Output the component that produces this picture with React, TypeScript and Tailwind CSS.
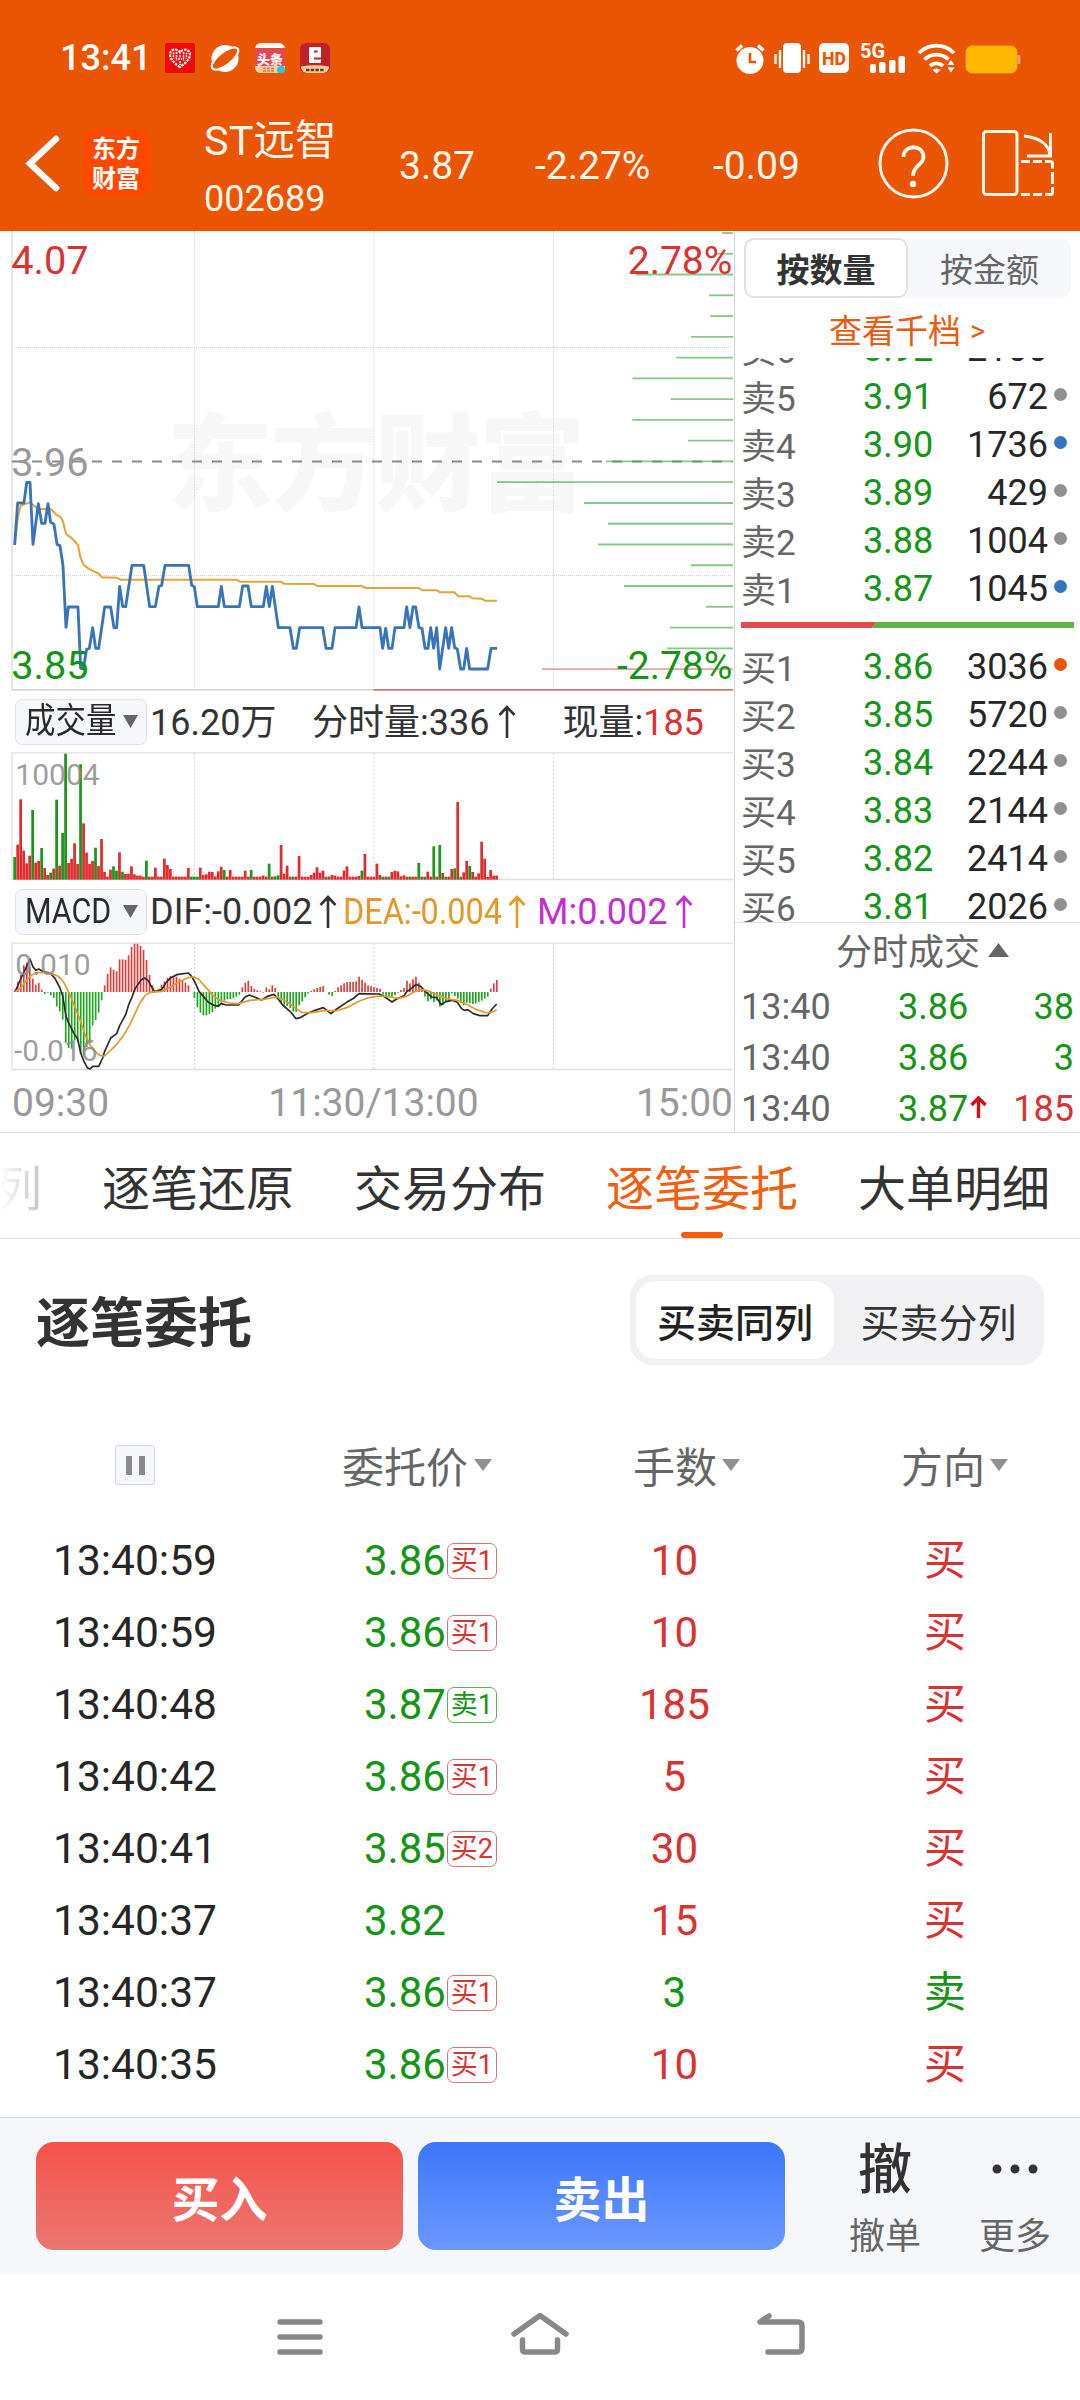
import React, { useState } from 'react';

const RED = '#d93331';
const GREEN = '#159515';

// Chart geometry is kept in 1/3 px units
const PRICE_LINE =
  '44,960 53,834 72,834 80,772 90,772 99,958 115,836 125,895 135,895 144,836 152,892 162,898 171,958 180,962 189,1022 198,1207 205,1146 234,1146 242,1330 250,1332 260,1272 268,1270 278,1208 287,1270 296,1270 314,1146 332,1146 342,1208 350,1208 359,1084 368,1145 377,1145 396,1021 431,1021 449,1145 466,1145 477,1084 485,1081 495,1021 566,1021 575,1081 583,1085 592,1145 655,1145 664,1084 673,1145 718,1145 728,1083 744,1083 754,1145 790,1145 799,1084 808,1145 817,1084 835,1208 870,1208 880,1270 889,1270 899,1208 968,1208 978,1270 996,1270 1005,1208 1068,1208 1077,1146 1086,1208 1140,1208 1148,1270 1157,1210 1166,1270 1176,1270 1185,1208 1212,1208 1220,1146 1230,1208 1239,1146 1247,1146 1257,1208 1266,1210 1275,1270 1284,1270 1292,1208 1301,1270 1310,1208 1319,1332 1337,1208 1346,1270 1355,1208 1364,1268 1372,1272 1382,1332 1391,1332 1400,1270 1409,1332 1463,1332 1473,1270 1491,1270';

const AVERAGE_LINE =
  '44,960 53,880 62,842 88,833 100,840 115,852 152,852 170,870 182,876 189,890 198,927 216,940 234,960 242,1000 252,1021 270,1034 296,1046 306,1057 350,1058 362,1064 710,1064 720,1070 842,1070 852,1076 942,1077 952,1083 1085,1083 1097,1089 1255,1089 1267,1096 1310,1096 1320,1102 1363,1102 1375,1114 1408,1114 1418,1120 1445,1121 1455,1127 1491,1127';

const DIF_LINE =
  '46,904 62,868 80,830 90,808 99,832 108,842 116,838 130,846 150,850 165,866 180,895 188,918 198,980 206,1000 220,1028 233,1048 242,1090 252,1116 262,1134 270,1138 278,1130 296,1130 308,1105 314,1085 332,1045 350,1032 359,1008 377,975 386,945 395,925 404,900 413,885 424,870 434,865 444,872 455,892 464,906 485,900 497,880 510,866 530,855 565,850 575,860 586,880 597,905 610,920 625,938 640,946 655,950 663,942 680,946 716,946 735,922 748,916 763,922 785,931 802,920 822,914 836,930 848,946 870,965 888,987 900,984 925,970 945,962 970,954 993,972 1010,958 1040,938 1062,925 1077,912 1138,913 1155,922 1176,937 1190,928 1212,918 1221,905 1230,900 1248,884 1262,890 1275,905 1295,922 1310,924 1324,945 1338,936 1356,932 1372,938 1384,956 1393,962 1403,960 1420,972 1440,978 1463,978 1476,958 1490,943';

const DEA_LINE =
  '46,906 62,895 80,872 95,856 110,849 130,849 155,852 175,860 190,876 205,905 220,940 240,990 255,1035 270,1065 285,1085 300,1098 314,1099 330,1084 350,1064 370,1038 390,1004 405,972 420,940 435,918 450,908 485,905 510,893 540,875 565,864 580,862 595,868 615,890 640,918 660,933 690,940 715,942 750,932 790,929 830,922 850,930 880,950 905,968 935,969 975,963 1010,963 1040,954 1080,933 1110,923 1140,919 1165,921 1195,926 1220,920 1240,908 1262,900 1280,902 1305,912 1335,926 1372,932 1400,944 1430,960 1455,968 1470,969 1490,961';

// Left end of each depth bar, one per price tick from the top
const DEPTH = [2166, 2150, 1907, 2127, 2131, 2073, 2029, 1897, 2012, 1897, 2064, 1818, 1491, 1752, 1824, 1794, 2073, 1872, 2118, 2010, 2001, 1626, 1120];

// Negative means a falling minute
const VOLUMES = [
  -68, 105, 241, 87, 49, 72, -209, 51, 56, -95, 35, 14, -21, 33, -240, 42, -140, -378, 50, 63, 109, 47, -346, 169, 81, 47, 56, -96, 41, 122,
  23, 9, 30, -40, -27, 82, -24, 17, 18, 40, 16, 12, 12, 9, -57, 9, 9, 36, 9, 9, 63, 44, 32, 9, 9, 9, 9, 9, 35, -9,
  -9, -9, 36, 14, 16, 24, 23, 10, 25, 39, -29, 9, 29, 9, 9, 9, 9, 27, 9, -29, 9, 9, 9, 12, 9, -48, 9, -10, -13, 104,
  18, 42, 9, -9, 9, 71, 9, 9, 9, 14, 21, 37, 21, 27, -9, 9, 14, 12, 9, 9, 27, 40, 9, 9, 9, 11, -27, 77, 9, 9,
  9, 48, 14, -9, 9, -9, 23, 27, 25, 10, 13, 9, -9, 9, 9, -50, 9, -9, 24, 9, -100, 9, -104, 20, -9, 9, 32, -34, 233, -9,
  22, 56, -41, 23, 9, 19, 114, 63, 8, 29, 12, 12,
];

const MACD = [
  5, 30, 52, 80, 88, 75, 40, 22, 27, 7, -6, -2, -10, -18, -43, -58, -83, -152, -168, -170, -145, -150, -185, -190, -165, -155, -100, -84, -62, -25,
  20, 54, 74, 67, 62, 98, 98, 97, 110, 135, 145, 145, 138, 126, 96, 51, 20, 3, 8, 22, 32, 42, 48, 48, 46, 40, 34, 28, 20, 0,
  -18, -46, -62, -70, -70, -66, -60, -50, -40, -32, -26, -22, -22, -18, -14, -8, 14, 28, 34, 18, 10, 5, 2, -2, 14, 8, 20, 12, -18, -34,
  -38, -42, -48, -58, -60, -40, -28, -16, -4, 3, 8, 12, 15, 18, 0, -8, -12, 3, 14, 20, 26, 30, 30, 30, 32, 46, 36, 28, 20, 18,
  15, 12, 10, -8, -12, -14, -14, -10, -2, 6, 12, 34, 26, 38, 46, 28, 10, -14, -28, -22, -30, -26, -44, -40, -30, -26, -4, -12, -20, -34,
  -40, -32, -34, -36, -34, -30, -26, -20, -14, 10, 26, 36,
];

interface Level {
  label: string;
  price: string;
  volume: string;
  dot: string;
}

const asks: Level[] = [
  { label: '卖6', price: '3.92', volume: '2100', dot: 'bg-transparent' },
  { label: '卖5', price: '3.91', volume: '672', dot: 'bg-[#8f8f94]' },
  { label: '卖4', price: '3.90', volume: '1736', dot: 'bg-[#3274c0]' },
  { label: '卖3', price: '3.89', volume: '429', dot: 'bg-[#8f8f94]' },
  { label: '卖2', price: '3.88', volume: '1004', dot: 'bg-[#8f8f94]' },
  { label: '卖1', price: '3.87', volume: '1045', dot: 'bg-[#3274c0]' },
];

const bids: Level[] = [
  { label: '买1', price: '3.86', volume: '3036', dot: 'bg-[#ea5504]' },
  { label: '买2', price: '3.85', volume: '5720', dot: 'bg-[#8f8f94]' },
  { label: '买3', price: '3.84', volume: '2244', dot: 'bg-[#8f8f94]' },
  { label: '买4', price: '3.83', volume: '2144', dot: 'bg-[#8f8f94]' },
  { label: '买5', price: '3.82', volume: '2414', dot: 'bg-[#8f8f94]' },
  { label: '买6', price: '3.81', volume: '2026', dot: 'bg-[#8f8f94]' },
];

const trades = [
  { time: '13:40', price: '3.86', volume: '38', up: false },
  { time: '13:40', price: '3.86', volume: '3', up: false },
  { time: '13:40', price: '3.87', volume: '185', up: true },
];

const orders = [
  { time: '13:40:59', price: '3.86', tag: '买1', lots: '10', side: '买' },
  { time: '13:40:59', price: '3.86', tag: '买1', lots: '10', side: '买' },
  { time: '13:40:48', price: '3.87', tag: '卖1', lots: '185', side: '买' },
  { time: '13:40:42', price: '3.86', tag: '买1', lots: '5', side: '买' },
  { time: '13:40:41', price: '3.85', tag: '买2', lots: '30', side: '买' },
  { time: '13:40:37', price: '3.82', tag: '', lots: '15', side: '买' },
  { time: '13:40:37', price: '3.86', tag: '买1', lots: '3', side: '卖' },
  { time: '13:40:35', price: '3.86', tag: '买1', lots: '10', side: '买' },
];

const tabs = ['逐笔还原', '交易分布', '逐笔委托', '大单明细'];

function StatusBar() {
  return (
    <div className="flex h-[98px] items-center pt-[18px] pl-[60px] pr-[56px] text-white">
      <span className="w-[105px] text-[36px] leading-none font-medium">13:41</span>
      <div className="flex gap-[15px]">
        <svg className="h-[30px] w-[30px]" viewBox="0 0 30 30">
          <rect width="30" height="30" rx="2" fill="#ef0a0a" />
          <path d="M15 24C9 20 5 16 5 11.500 5 6 12 5 15 9.500 18 5 25 6 25 11.500 25 16 21 20 15 24Z" fill="none" stroke="#fff" strokeWidth="2.200" strokeDasharray="2.500 1" />
          <path d="M8.500 9.500v6M11.500 9v9M18.500 9v9M21.500 9.500v6M15 12v3M13 16h4M15 18v4" stroke="#fff" strokeWidth="1.600" strokeDasharray="2 .8" />
        </svg>
        <svg className="h-[30px] w-[30px]" viewBox="0 0 30 30">
          <circle cx="15" cy="15.500" r="13.500" fill="#fff" />
          <ellipse cx="15" cy="15.500" rx="16" ry="6.500" transform="rotate(-38 15 15.500)" fill="#ea5504" stroke="#fff" strokeWidth="2.200" />
        </svg>
        <svg className="h-[30px] w-[30px]" viewBox="0 0 30 30">
          <rect width="30" height="30" rx="6" fill="#fff" />
          <path d="M0 5h30v19H0z" fill="#e64650" />
          <path d="M0 23h30v1a6 6 0 0 1-6 6H6a6 6 0 0 1-6-6z" fill="#f9cf9a" />
          <text x="15" y="20.500" textAnchor="middle" fontSize="13" fontWeight="900" fill="#fff" fontFamily="'Noto Sans CJK SC',sans-serif">头条</text>
          <path d="M8 25.500h11M8 28h11" stroke="#e8743c" strokeWidth="1.300" strokeDasharray="3 1" />
          <circle cx="26" cy="27" r="4" fill="#2cc4d8" />
        </svg>
        <svg className="h-[30px] w-[30px]" viewBox="0 0 30 30">
          <rect width="30" height="30" rx="6" fill="#c0202a" />
          <path d="M1 23.500Q15 21 29 23.500V24a6 6 0 0 1-6 6H7a6 6 0 0 1-6-6z" fill="#f2cf9c" />
          <rect x="9" y="4" width="12" height="16" rx="1" fill="#fff" />
          <path d="M14 8.500h3.500M14 15.500h7.500" stroke="#c0202a" strokeWidth="2.200" />
          <path d="M6 27h18" stroke="#6a3a20" strokeWidth="2.500" strokeDasharray="3.500 1.200" />
        </svg>
      </div>
      <svg className="ml-auto h-[32px] w-[290px]" viewBox="734 42 290 32">
        <g fill="#fff">
          <circle cx="750" cy="60.500" r="13.500" />
          <path d="M750 53v9h6" fill="none" stroke="#ea5504" strokeWidth="2.600" />
          <path d="M736.500 50.500l5.500-5M763.500 50.500l-5.500-5" stroke="#fff" strokeWidth="3.500" />
          <rect x="783" y="43" width="18" height="30" rx="4" />
          <path d="M780 50v18M775.500 54v10M804 50v18M808.500 54v10" stroke="#fff" strokeWidth="2.400" />
          <rect x="819" y="43" width="30" height="30" rx="5" />
          <text x="834" y="65" textAnchor="middle" fontSize="19" fontWeight="800" fill="#ea5504" fontFamily="Roboto,sans-serif" textLength="24" lengthAdjust="spacingAndGlyphs">HD</text>
          <text x="860" y="58" fontSize="20" fontWeight="700" fontFamily="Roboto,sans-serif" textLength="25" lengthAdjust="spacingAndGlyphs">5G</text>
          <rect x="870" y="64" width="6" height="9" rx="2" />
          <rect x="879" y="62" width="6.500" height="11" rx="2" />
          <rect x="889" y="60" width="6.500" height="13" rx="2" />
          <rect x="898.500" y="56" width="6.500" height="17" rx="2" />
          <path d="M919 53a24.500 24.500 0 0 1 35 0M924.500 59.500a17 17 0 0 1 24 0M930 66a9.500 9.500 0 0 1 13 0" fill="none" stroke="#fff" strokeWidth="3.800" />
          <path d="M932.500 70l4 3.500 4-3.500q-4-3-8 0zM947.500 65l3.500-5 3.500 5zM947.500 67.500l3.500 5 3.500-5z" />
        </g>
        <rect x="966" y="46" width="51" height="27" rx="6" fill="#ffb800" stroke="#f6a04a" strokeWidth="1" />
        <path d="M1017.500 55h2q1 0 1 2v5q0 2-1 2h-2z" fill="#f7a468" />
      </svg>
    </div>
  );
}

function TitleBar() {
  return (
    <div className="flex h-[133px] items-center text-[#fff6ea]">
      <svg className="ml-[24px] mb-[4px] h-[60px] w-[40px]" viewBox="0 0 40 60">
        <path d="M32 6L6 30.500 32 55" fill="none" stroke="#fff" strokeWidth="6.500" strokeLinecap="round" />
      </svg>
      <div className="mb-[3px] ml-[19px] flex h-[68px] w-[68px] flex-col items-center justify-center rounded-[14px] bg-[#ff4800] pr-[2px] pb-[2px] font-['Noto_Sans_CJK_SC',sans-serif] text-[24px] leading-[30px] font-bold text-white">
        <span>东方</span>
        <span>财富</span>
      </div>
      <div className="ml-[53px] w-[195px] pt-[11px]">
        <div className="text-[41.500px] leading-[58px]">ST远智</div>
        <div className="text-[36px] leading-[59px]">002689</div>
      </div>
      <span className="w-[136px] pt-[4px] text-[39px]">3.87</span>
      <span className="w-[178px] pt-[4px] text-[39px]">-2.27%</span>
      <span className="pt-[4px] text-[39px]">-0.09</span>
      <svg className="ml-auto mr-[25px] mb-[2px] h-[72px] w-[178px]" viewBox="877 128 178 72">
        <g fill="none" stroke="#fff6ea" strokeWidth="3">
          <circle cx="913.500" cy="163.500" r="33.500" />
          <path d="M903.500 157c0-13 20-13 20 0 0 8-10.500 8-10.500 19" strokeWidth="3.800" />
          <circle cx="913" cy="184" r="1.700" />
          <rect x="983.500" y="131.500" width="33.500" height="63" rx="3" />
          <path d="M1024 136q25 3 26 20M1050.500 133v23H1027" />
          <path d="M1021 161.500h9M1033 161.500h9M1045 161.500h5.500q2 0 2 2v5M1052.500 172v12M1052.500 187v5.500q0 2-2 2h-5.500M1042 194.500h-9M1030 194.500h-9" />
        </g>
      </svg>
    </div>
  );
}

function PriceChart() {
  return (
    <svg className="block h-[460px] w-[734px]" viewBox="0 18 2202 1380" fontFamily="Roboto,sans-serif">
      <text x="500" y="830" fontSize="318" fontWeight="900" fill="#f7f7f7" textLength="1256" fontFamily="'Noto Sans CJK SC',sans-serif">东方财富</text>
      <g stroke="#d4d4d4" strokeWidth="3" strokeDasharray="3 3">
        <path d="M36 367.500H2196M36 1051.500H2196M583.500 18V1394M1121.500 18V1394M1660.500 18V1394" />
      </g>
      <path d="M36 18V1394" stroke="#e2e2e2" strokeWidth="5" />
      <path d="M34 1394.500H2199" stroke="#d8d8d8" strokeWidth="5" />
      <path d="M36 709.500H2199" stroke="#8a8a8a" strokeWidth="6" strokeDasharray="30 30" />
      {DEPTH.map((left, i) => (
        <path
          key={i}
          d={`M${left} ${24 + i * 62.300}H2199`}
          stroke={i > 20 ? '#cf4a4a' : '#4aa84a'}
          strokeOpacity={i === 21 ? 0.5 : 0.65}
          strokeWidth="5.500"
        />
      ))}
      <polyline points={AVERAGE_LINE} fill="none" stroke="#e3a23a" strokeWidth="6" />
      <polyline points={PRICE_LINE} fill="none" stroke="#3874b8" strokeWidth="8.500" strokeLinejoin="round" />
      <g fontSize="119">
        <text x="34" y="147" fill={RED}>4.07</text>
        <text x="34" y="752" fill="#999">3.96</text>
        <text x="34" y="1361" fill={GREEN}>3.85</text>
        <text x="2197" y="147" textAnchor="end" fill={RED} fontSize="117">2.78%</text>
        <text x="2197" y="1361" textAnchor="end" fill={GREEN} fontSize="117">-2.78%</text>
      </g>
    </svg>
  );
}

function VolumeChart() {
  return (
    <svg className="block h-[129px] w-[734px]" viewBox="0 188 2202 387" fontFamily="Roboto,sans-serif">
      <path d="M583.500 190V570M1121.500 190V570M1660.500 190V570" stroke="#d4d4d4" strokeWidth="3" strokeDasharray="6 6" />
      <path d="M36 190V572M34 190.500H2199M34 570.500H2199" stroke="#dedede" strokeWidth="4" fill="none" />
      {VOLUMES.map((v, i) => (
        <rect key={i} x={40 + i * 8.980} y={571 - Math.abs(v)} width="8.200" height={Math.abs(v)} fill={v < 0 ? '#1c951c' : '#e02c2c'} />
      ))}
      <text x="46" y="288" fontSize="90" fill="#8c8c8c" fillOpacity="0.85">10004</text>
    </svg>
  );
}

function MacdChart() {
  return (
    <svg className="block h-[129px] w-[734px]" viewBox="0 757 2202 387" fontFamily="Roboto,sans-serif">
      <path d="M583.500 760V1140M1121.500 760V1140M1660.500 760V1140" stroke="#d4d4d4" strokeWidth="3" strokeDasharray="6 6" />
      <path d="M36 760V1142M34 760.500H2199M34 1139.500H2199" stroke="#dedede" strokeWidth="4" fill="none" />
      {MACD.map((v, i) => (
        <rect key={i} x={42 + i * 8.980} y={v < 0 ? 907 : 907 - v} width="5" height={Math.abs(v)} fill={v < 0 ? '#1fa51f' : '#dc3c3c'} />
      ))}
      <polyline points={DIF_LINE} fill="none" stroke="#2b2b2b" strokeWidth="5" strokeLinejoin="round" />
      <polyline points={DEA_LINE} fill="none" stroke="#e8962a" strokeWidth="5" strokeLinejoin="round" />
      <text x="46" y="857" fontSize="90" fill="#8c8c8c" fillOpacity="0.85">0.010</text>
      <text x="42" y="1115" fontSize="90" fill="#8c8c8c" fillOpacity="0.85">-0.016</text>
    </svg>
  );
}

function UpArrow({ className }: { className: string }) {
  return (
    <svg className={`h-[34px] w-[18px] shrink-0 ${className}`} viewBox="0 0 18 34">
      <path d="M9 33V2M1.500 10L9 2l7.500 8" fill="none" stroke="currentColor" strokeWidth="2.600" />
    </svg>
  );
}

function Caret({ className }: { className: string }) {
  return (
    <svg className={className} viewBox="0 0 18 12" preserveAspectRatio="none">
      <path d="M0 0h18L9 12z" fill="currentColor" />
    </svg>
  );
}

function IndicatorChip({ name }: { name: string }) {
  return (
    <div className="ml-[15px] flex h-[46px] w-[132px] shrink-0 items-center rounded-[7px] border border-[#e1e3e6] bg-[#f6f7fa] pl-[9px]">
      <span className="w-[98px] origin-left scale-x-[0.87] text-[35px] leading-none whitespace-nowrap text-[#2b2b2b]">{name}</span>
      <Caret className="h-[13px] w-[15px] shrink-0 text-[#666]" />
    </div>
  );
}

function ChartPanel() {
  return (
    <div className="flex w-[734px] shrink-0 flex-col">
      <PriceChart />
      <div className="flex h-[61px] items-center text-[36px] leading-none whitespace-nowrap text-[#333]">
        <IndicatorChip name="成交量" />
        <span className="ml-[3px] w-[162px] pt-[2px]">16.20万</span>
        <span className="pt-[2px]">分时量:336</span>
        <UpArrow className="ml-[9px]" />
        <span className="ml-[46px] pt-[2px]">现量:</span>
        <span className="pt-[2px] text-[#d93331]">185</span>
      </div>
      <VolumeChart />
      <div className="flex h-[61px] items-center text-[36px] leading-none whitespace-nowrap text-[#333]">
        <IndicatorChip name="MACD" />
        <span className="ml-[3px] w-[169px]">DIF:-0.002</span>
        <UpArrow className="" />
        <span className="ml-[6px] flex w-[165px] text-[#e8962a]">
          <span className="origin-left scale-x-[0.9]">DEA:-0.004</span>
        </span>
        <UpArrow className="text-[#e8962a]" />
        <span className="ml-[11px] w-[138px] text-[#c22fcf]">M:0.002</span>
        <UpArrow className="text-[#c22fcf]" />
      </div>
      <MacdChart />
      <div className="flex h-[60px] items-center justify-between pt-[5px] pl-[12px] pr-[1px] text-[39px] leading-none text-[#999]">
        <span>09:30</span>
        <span className="pl-[2px]">11:30/13:00</span>
        <span>15:00</span>
      </div>
    </div>
  );
}

function LevelRow({ level }: { level: Level }) {
  return (
    <div className="flex h-[48px] shrink-0 items-center pl-[6px] pr-[13px] text-[36px] leading-none">
      <span className="w-[122px] pt-[7px] text-[35px] text-[#666]">{level.label}</span>
      <span className="pt-[2px] text-[#159515]">{level.price}</span>
      <span className="ml-auto pt-[2px] text-[#262626]">{level.volume}</span>
      <span className={`mb-[4px] ml-[6px] h-[13px] w-[13px] rounded-full ${level.dot}`} />
    </div>
  );
}

function OrderBook() {
  const [mode, setMode] = useState('按数量');

  return (
    <div className="flex flex-1 flex-col border-l border-[#d4d4d4]">
      <div className="mt-[7px] ml-[9px] flex h-[60px] w-[327px] shrink-0 rounded-[10px] bg-[#f6f7fa] text-[33px] leading-none">
        {['按数量', '按金额'].map(name => (
          <button
            key={name}
            onClick={() => setMode(name)}
            className={
              mode === name
                ? 'w-[164px] rounded-[10px] border-2 border-[#e0e0e0] bg-white pt-[4px] font-bold text-[#333]'
                : 'w-[163px] pt-[4px] text-[#666]'
            }
          >
            {name}
          </button>
        ))}
      </div>
      <div className="flex h-[60px] shrink-0 items-center justify-center pr-[1px] pt-[6px] text-[33px] leading-none text-[#ea5b10]">
        <span>查看千档</span>
        <span className="ml-[9px] text-[29px]">&gt;</span>
      </div>
      <div className="flex h-[263px] shrink-0 flex-col justify-end overflow-hidden pb-[9px]">
        {asks.map(level => (
          <LevelRow key={level.label} level={level} />
        ))}
      </div>
      <svg className="mt-[1px] ml-[6px] block h-[6px] w-[333px] shrink-0" viewBox="0 0 333 6">
        <path d="M0 0h136l-5 6H0z" fill="#e04b4b" />
        <path d="M136 0h197v6H131z" fill="#5bb54a" />
      </svg>
      <div className="h-[295px] shrink-0 overflow-hidden border-b border-[#e3e3e3] pt-[14px]">
        {bids.map(level => (
          <LevelRow key={level.label} level={level} />
        ))}
      </div>
      <div className="flex h-[56px] shrink-0 items-center justify-center pt-[4px] pl-[30px] text-[36px] leading-none text-[#666]">
        分时成交
        <Caret className="mb-[7px] ml-[8px] h-[14px] w-[21px] rotate-180" />
      </div>
      {trades.map((t, i) => (
        <div key={i} className="flex h-[51px] shrink-0 items-center pt-[5px] pl-[6px] pr-[6px] text-[36px] leading-none">
          <span className="w-[157px] text-[#666]">{t.time}</span>
          <span className="text-[#159515]">{t.price}</span>
          {t.up && (
            <svg className="mb-[4px] ml-[2px] h-[24px] w-[17px]" viewBox="0 0 17 24">
              <path d="M8.500 23V3M1.500 10l7-7 7 7" fill="none" stroke="#d01010" strokeWidth="3.400" />
            </svg>
          )}
          <span className={t.up ? 'ml-auto text-[#d93331]' : 'ml-auto text-[#159515]'}>{t.volume}</span>
        </div>
      ))}
    </div>
  );
}

function Tabs() {
  const [active, setActive] = useState('逐笔委托');

  return (
    <div className="flex h-[107px] overflow-hidden border-t border-b border-[#e0e0e0] text-[48px] leading-none whitespace-nowrap text-[#333]">
      <span className="w-[102px] shrink-0 bg-linear-to-r from-white to-[#bdbdbd] to-45% bg-clip-text pt-[33px] text-transparent">
        <span className="ml-[-6px]">列</span>
      </span>
      {tabs.map(tab => (
        <button key={tab} onClick={() => setActive(tab)} className="mr-[60px] flex w-[192px] shrink-0 flex-col items-center">
          <span className={tab === active ? 'mt-[33px] h-[66px] text-[#f0600f]' : 'mt-[33px] h-[66px]'}>{tab}</span>
          {tab === active && <span className="h-[6px] w-[42px] rounded-full bg-[#fa5a0a]" />}
        </button>
      ))}
    </div>
  );
}

function OrderList() {
  return (
    <div className="h-[878px] text-[#333]">
      <div className="flex h-[166px] items-center justify-between pl-[36px] pr-[36px] pb-[4px]">
        <h2 className="pt-[10px] text-[54px] leading-none font-bold">逐笔委托</h2>
        <div className="flex h-[90px] w-[414px] rounded-[22px] bg-[#f1f1f3] p-[6px] text-[39px] leading-none">
          <button className="w-[198px] rounded-[20px] bg-white pt-[8px] font-medium text-[#222]">买卖同列</button>
          <button className="w-[204px] pt-[8px] pl-[5px]">买卖分列</button>
        </div>
      </div>
      <div className="flex h-[120px] items-center text-[42px] leading-none text-[#666]">
        <div className="ml-[115px] flex h-[40px] w-[40px] items-center justify-center gap-[7px] rounded-[3px] border border-[#d5d9dd] bg-[#f6f7fa]">
          <span className="h-[19px] w-[6px] bg-[#8a8a8e]" />
          <span className="h-[19px] w-[6px] bg-[#8a8a8e]" />
        </div>
        <span className="ml-[187px] pt-[7px]">委托价</span>
        <Caret className="ml-[6px] h-[12px] w-[18px] text-[#8f8f94]" />
        <span className="ml-[141px] pt-[7px]">手数</span>
        <Caret className="ml-[5px] h-[12px] w-[18px] text-[#8f8f94]" />
        <span className="ml-[161px] pt-[7px]">方向</span>
        <Caret className="ml-[5px] h-[12px] w-[18px] text-[#8f8f94]" />
      </div>
      {orders.map((o, i) => (
        <div key={i} className="flex h-[72px] items-center text-[42px] leading-none">
          <span className="ml-[53px] w-[311px] text-[42.500px] text-[#262626]">{o.time}</span>
          <span className="text-[#159515]">{o.price}</span>
          <div className="w-[162px]">
            {o.tag && (
              <span
                className={
                  'ml-[1px] flex h-[36px] w-[50px] items-center justify-center rounded-[7px] border text-[27px] ' +
                  (o.tag.startsWith('卖') ? 'border-[#5fae5f] text-[#159515]' : 'border-[#cf7674] text-[#d93331]')
                }
              >
                {o.tag}
              </span>
            )}
          </div>
          <span className={o.side === '卖' ? 'w-[133px] text-center text-[#159515]' : 'w-[133px] text-center text-[#d93331]'}>{o.lots}</span>
          <span className={o.side === '卖' ? 'ml-[183px] text-[#159515]' : 'ml-[183px] text-[#d93331]'}>{o.side}</span>
        </div>
      ))}
    </div>
  );
}

function ActionBar() {
  return (
    <div className="flex h-[157px] items-start border-t border-[#d5d9dc] bg-[#f6f7fa] pt-[24px] pl-[36px]">
      <button className="h-[108px] w-[367px] rounded-[18px] bg-linear-to-b from-[#f4514a] to-[#eb766f] pt-[9px] text-[48px] leading-none font-bold text-white">买入</button>
      <button className="ml-[15px] h-[108px] w-[367px] rounded-[18px] bg-linear-to-b from-[#3b76fb] to-[#6b98ff] pt-[9px] text-[48px] leading-none font-bold text-white">卖出</button>
      <div className="ml-[57px] flex w-[86px] flex-col items-center">
        <span className="pt-[2px] text-[54px] leading-[54px] font-medium text-[#333]">撤</span>
        <span className="mt-[21px] text-[36px] leading-none text-[#666]">撤单</span>
      </div>
      <div className="ml-[44px] flex w-[86px] flex-col items-center">
        <svg className="h-[56px] w-[54px]" viewBox="0 0 54 56" fill="#333">
          <circle cx="9" cy="27" r="4.500" />
          <circle cx="27" cy="27" r="4.500" />
          <circle cx="45" cy="27" r="4.500" />
        </svg>
        <span className="mt-[21px] text-[36px] leading-none text-[#666]">更多</span>
      </div>
    </div>
  );
}

function NavBar() {
  return (
    <div className="flex h-[126px] items-start justify-center pt-[38px]">
      <svg className="h-[48px] w-[540px]" viewBox="270 2312 540 48">
        <g fill="none" stroke="#888" strokeWidth="5.500" strokeLinecap="round" strokeLinejoin="round">
          <path d="M280 2322h40M280 2337h40M280 2352h40" />
          <path d="M514 2334l26-18.500 26 18.500" />
          <path d="M522.500 2340v9q0 3 3 3h29q3 0 3-3v-9" />
          <path d="M769 2316l-9 6h38q4 0 4 4v22q0 4-4 4h-30" />
        </g>
      </svg>
    </div>
  );
}

export default function App() {
  return (
    <div className="h-[2400px] w-[1080px] overflow-hidden bg-white font-['Roboto','Noto_Sans_CJK_SC',sans-serif]">
      <header className="h-[231px] bg-[#ea5504]">
        <StatusBar />
        <TitleBar />
      </header>
      <section className="flex h-[901px]">
        <ChartPanel />
        <OrderBook />
      </section>
      <Tabs />
      <OrderList />
      <ActionBar />
      <NavBar />
    </div>
  );
}
